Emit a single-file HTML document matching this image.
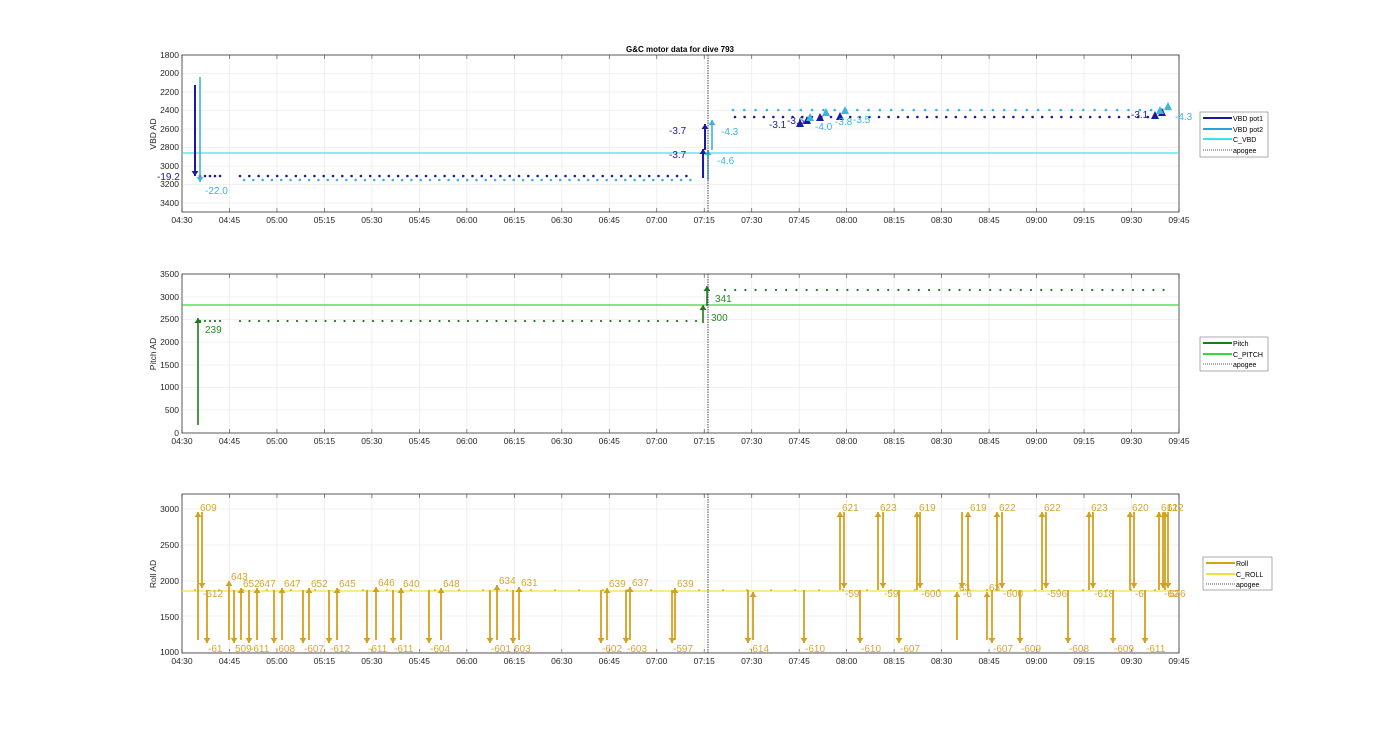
<!DOCTYPE html>
<html><head><meta charset="utf-8"><style>
html,body{margin:0;padding:0;background:#fff;}
svg{display:block;font-family:"Liberation Sans",sans-serif;}
.t{font-size:8.5px;fill:#262626;}
.lg{font-size:7px;fill:#000;}
</style></head><body>
<svg id="s" width="1400" height="733" xmlns="http://www.w3.org/2000/svg">
<rect width="1400" height="733" fill="#fff"/>
<g id="grid"></g>
<g id="data"></g>
<text x="680" y="52" text-anchor="middle" style="font-size:8px;font-weight:bold" fill="#000">G&amp;C motor data for dive 793</text>
<g class="t" text-anchor="end">
<text x="179" y="58">1800</text><text x="179" y="76">2000</text><text x="179" y="95">2200</text><text x="179" y="113">2400</text><text x="179" y="132">2600</text><text x="179" y="150">2800</text><text x="179" y="169">3000</text><text x="179" y="187">3200</text><text x="179" y="206">3400</text>
<text x="179" y="277">3500</text><text x="179" y="300">3000</text><text x="179" y="322">2500</text><text x="179" y="345">2000</text><text x="179" y="368">1500</text><text x="179" y="390">1000</text><text x="179" y="413">500</text><text x="179" y="436">0</text>
<text x="179" y="512">3000</text><text x="179" y="548">2500</text><text x="179" y="584">2000</text><text x="179" y="620">1500</text><text x="179" y="655">1000</text>
</g>
<g class="t" text-anchor="middle" id="xl"></g>
<text transform="translate(156,134) rotate(-90)" class="t" text-anchor="middle">VBD AD</text>
<text transform="translate(156,354) rotate(-90)" class="t" text-anchor="middle">Pitch AD</text>
<text transform="translate(156,574) rotate(-90)" class="t" text-anchor="middle">Roll AD</text>
<g style="font-size:10px">
<text x="157" y="180" fill="#1a1aa0">-19.2</text>
<text x="205" y="194" fill="#3cb4e0">-22.0</text>
<text x="669" y="134" fill="#1a1aa0">-3.7</text>
<text x="669" y="158" fill="#1a1aa0">-3.7</text>
<text x="721" y="135" fill="#3cb4e0">-4.3</text>
<text x="717" y="164" fill="#3cb4e0">-4.6</text>
<text x="769" y="128" fill="#1a1aa0">-3.1</text>
<text x="787" y="124" fill="#1a1aa0">-3.6</text>
<text x="815" y="130" fill="#3cb4e0">-4.0</text>
<text x="835" y="125" fill="#3cb4e0">-3.8</text>
<text x="853" y="123" fill="#3cb4e0">-3.5</text>
<text x="1131" y="118" fill="#1a1aa0">-3.1</text>
<text x="1175" y="120" fill="#3cb4e0">-4.3</text>
<text x="205" y="333" fill="#228b22">239</text>
<text x="715" y="302" fill="#228b22">341</text>
<text x="711" y="321" fill="#228b22">300</text>
</g>
<g id="rl" style="font-size:10px" fill="#d4a830"></g>
<g>
<rect x="1200" y="112" width="68" height="45" fill="#fff" stroke="#888" stroke-width="0.7"/>
<line x1="1203" y1="118" x2="1232" y2="118" stroke="#1a1aa0" stroke-width="2"/><text x="1233" y="121" class="lg">VBD pot1</text>
<line x1="1203" y1="129" x2="1232" y2="129" stroke="#2aa0e0" stroke-width="2"/><text x="1233" y="132" class="lg">VBD pot2</text>
<line x1="1203" y1="139" x2="1232" y2="139" stroke="#40e0e8" stroke-width="2"/><text x="1233" y="142" class="lg">C_VBD</text>
<line x1="1203" y1="150" x2="1232" y2="150" stroke="#555" stroke-width="1" stroke-dasharray="1,1"/><text x="1233" y="153" class="lg">apogee</text>
<rect x="1200" y="337" width="68" height="34" fill="#fff" stroke="#888" stroke-width="0.7"/>
<line x1="1203" y1="343" x2="1232" y2="343" stroke="#1e7a1e" stroke-width="2"/><text x="1233" y="346" class="lg">Pitch</text>
<line x1="1203" y1="354" x2="1232" y2="354" stroke="#3ad83a" stroke-width="2"/><text x="1233" y="357" class="lg">C_PITCH</text>
<line x1="1203" y1="364" x2="1232" y2="364" stroke="#555" stroke-width="1" stroke-dasharray="1,1"/><text x="1233" y="367" class="lg">apogee</text>
<rect x="1203" y="557" width="69" height="33" fill="#fff" stroke="#888" stroke-width="0.7"/>
<line x1="1206" y1="563" x2="1235" y2="563" stroke="#d4a020" stroke-width="2"/><text x="1236" y="566" class="lg">Roll</text>
<line x1="1206" y1="574" x2="1235" y2="574" stroke="#f0e040" stroke-width="2"/><text x="1236" y="577" class="lg">C_ROLL</text>
<line x1="1206" y1="584" x2="1235" y2="584" stroke="#555" stroke-width="1" stroke-dasharray="1,1"/><text x="1236" y="587" class="lg">apogee</text>
</g>
</svg>
<script>
var NS="http://www.w3.org/2000/svg";
function el(p,t,a){var e=document.createElementNS(NS,t);for(var k in a)e.setAttribute(k,a[k]);p.appendChild(e);return e;}
var G=document.getElementById('grid'),D=document.getElementById('data'),XL=document.getElementById('xl'),RL=document.getElementById('rl');
var X0=182,X1=1179,dx=(X1-X0)/21;
var axes=[[55,212,[55,73.5,92,110.5,129,147.5,166,184.5,203]],[274,433,[274,297,319.5,342,365,387.5,410,433]],[494,653,[509,545,581,616,652]]];
var labs=["04:30","04:45","05:00","05:15","05:30","05:45","06:00","06:15","06:30","06:45","07:00","07:15","07:30","07:45","08:00","08:15","08:30","08:45","09:00","09:15","09:30","09:45"];
axes.forEach(function(a){
 for(var i=0;i<=21;i++){var x=X0+i*dx;el(G,'line',{x1:x,y1:a[0],x2:x,y2:a[1],stroke:'#ebebeb','stroke-width':0.8});
  el(G,'line',{x1:x,y1:a[1],x2:x,y2:a[1]-4,stroke:'#555','stroke-width':0.7});el(G,'line',{x1:x,y1:a[0],x2:x,y2:a[0]+4,stroke:'#555','stroke-width':0.7});
  var t=el(XL,'text',{x:x,y:a[1]+11});t.textContent=labs[i];}
 a[2].forEach(function(y){el(G,'line',{x1:X0,y1:y,x2:X1,y2:y,stroke:'#ebebeb','stroke-width':0.8});});
 el(G,'rect',{x:X0,y:a[0],width:X1-X0,height:a[1]-a[0],fill:'none',stroke:'#333','stroke-width':0.8});
});
function dot(x,y,c,r){el(D,'circle',{cx:x,cy:y,r:r||1.3,fill:c});}
function arr(x,y1,y2,c,w){el(D,'line',{x1:x,y1:y1,x2:x,y2:y2,stroke:c,'stroke-width':w||2});var d=y2<y1?5:-5;el(D,'polygon',{points:(x-3.5)+','+(y2+d)+' '+(x+3.5)+','+(y2+d)+' '+x+','+y2,fill:c});}
el(D,'line',{x1:X0,y1:153,x2:X1,y2:153,stroke:'#40e0e8','stroke-width':1.2});
var x;
for(x=200;x<224;x+=5)dot(x,176,'#1a1aa0');
for(x=240;x<695;x+=9.3){dot(x,176,'#1a1aa0');dot(x+4,180,'#3cb4e0');}
for(x=735;x<1150;x+=9.6){dot(x,117,'#1a1aa0');}
for(x=730;x<1160;x+=11.3){dot(x+3,110,'#3cb4e0');}
arr(195,85,176,'#1a1aa0');arr(200,77,182,'#3cb4e0',1.6);
arr(703,178,149,'#1a1aa0');arr(705,150,124,'#1a1aa0');arr(708,180,150,'#3cb4e0',1.6);arr(712,150,120,'#3cb4e0',1.6);
[[800,123],[807,120],[820,117],[840,116],[1155,115],[1162,112]].forEach(function(p){el(D,'polygon',{points:(p[0]-4)+','+(p[1]+4)+' '+(p[0]+4)+','+(p[1]+4)+' '+p[0]+','+(p[1]-4),fill:'#1a1aa0'});});
[[810,117],[826,112],[845,110],[1160,110],[1168,106]].forEach(function(p){el(D,'polygon',{points:(p[0]-4)+','+(p[1]+4)+' '+(p[0]+4)+','+(p[1]+4)+' '+p[0]+','+(p[1]-4),fill:'#3cb4e0'});});
el(D,'line',{x1:X0,y1:305,x2:X1,y2:305,stroke:'#3ad83a','stroke-width':1.2});
for(x=200;x<222;x+=5)dot(x,321,'#1e7a1e',1.1);
for(x=240;x<700;x+=9.5)dot(x,321,'#1e7a1e',1.1);
for(x=725;x<1168;x+=10.2)dot(x,290,'#1e7a1e',1.1);
arr(198,425,318,'#1e7a1e',1.6);arr(703,323,305,'#1e7a1e',1.6);arr(707,306,286,'#1e7a1e',1.6);
el(D,'line',{x1:X0,y1:591,x2:X1,y2:591,stroke:'#f0e040','stroke-width':1.2});
for(x=195;x<1170;x+=24)dot(x,590,'#d4a020',0.9);
var up=[[198,640,512,'609'],[229,640,581,'643'],[241,640,588,'652'],[257,640,588,'647'],[282,640,588,'647'],[309,640,588,'652'],[337,640,588,'645'],[376,640,587,'646'],[401,640,588,'640'],[441,640,588,'648'],[497,640,585,'634'],[519,640,587,'631'],[607,640,588,'639'],[630,640,587,'637'],[675,640,588,'639'],[840,590,512,'621'],[878,590,512,'623'],[917,590,512,'619'],[968,590,512,'619'],[997,590,512,'622'],[1042,590,512,'622'],[1089,590,512,'623'],[1130,590,512,'620'],[1159,590,512,'612'],[1165,590,512,'612'],[753,640,592,''],[957,640,592,'63'],[987,640,592,'63']];
var dn=[[202,512,588,'-612'],[207,590,643,'-61'],[234,590,643,'509'],[249,590,643,'-611'],[274,590,643,'-608'],[303,590,643,'-607'],[329,590,643,'-612'],[367,590,643,'-611'],[393,590,643,'-611'],[429,590,643,'-604'],[490,590,643,'-601'],[513,590,643,'603'],[601,590,643,'-602'],[626,590,643,'-603'],[672,590,643,'-597'],[748,590,643,'-614'],[804,590,643,'-610'],[844,512,588,'-59'],[860,590,643,'-610'],[883,512,588,'-59'],[899,590,643,'-607'],[920,512,588,'-600'],[962,512,588,'-6'],[992,590,643,'-607'],[1002,512,588,'-600'],[1020,590,643,'-609'],[1046,512,588,'-596'],[1068,590,643,'-608'],[1093,512,588,'-618'],[1113,590,643,'-609'],[1134,512,588,'-6'],[1145,590,643,'-611'],[1163,512,588,'-62'],[1168,512,588,'626']];
up.forEach(function(a){arr(a[0],a[1],a[2],'#d4a020',1.8);if(a[3]){var t=el(RL,'text',{x:a[0]+2,y:a[2]-1});t.textContent=a[3];}});
dn.forEach(function(a){arr(a[0],a[1],a[2],'#d4a020',1.8);if(a[3]){var t=el(RL,'text',{x:a[0]+1,y:a[2]+9});t.textContent=a[3];}});
[[55,212],[274,433],[494,653]].forEach(function(a){el(D,'line',{x1:708,y1:a[0],x2:708,y2:a[1],stroke:'#444','stroke-width':1,'stroke-dasharray':'1.5,1'});});
</script>
</body></html>
